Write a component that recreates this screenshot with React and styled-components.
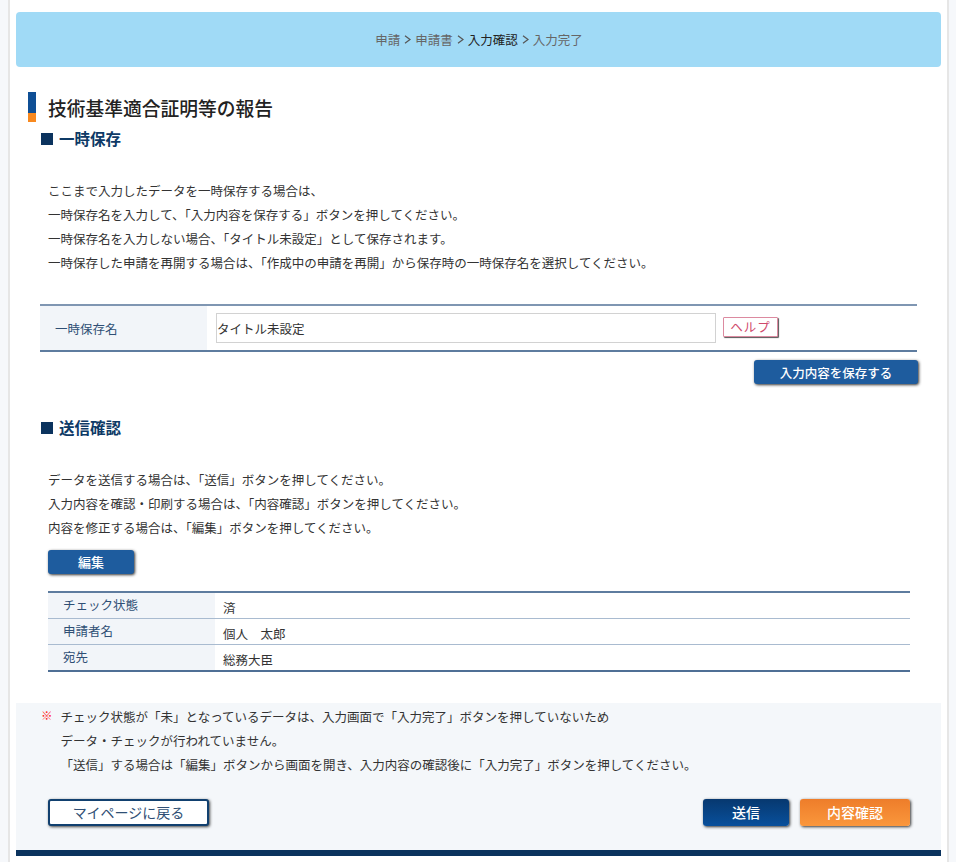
import React from "react";
import styled, { createGlobalStyle } from "styled-components";

const Global = createGlobalStyle`
  html, body { margin: 0; padding: 0; background: #f6f8fb; }
  body { font-family: "Noto Sans CJK JP", "Noto Sans", sans-serif; color: #333; overflow: hidden; }
`;
const Page = styled.div`
  box-sizing: border-box; width: 941px; height: 862px; margin-left: 8px; background: #fff;
  border-left: 2px solid #e6e6e6; border-right: 2px solid #e6e6e6; padding: 12px 6px 0;
`;
const Crumbs = styled.nav`
  height: 55px; border-radius: 4px; background: #a0daf6; display: flex; align-items: center; justify-content: center;
  gap: 4px; font-size: 12.5px; color: #666; padding-left: 1px; box-sizing: border-box;
`;
const Crumb = styled.span`color: ${p => (p.$on ? "#222" : "#666")};`;
const Sep = styled.svg`width: 7px; height: 9px; fill: none; stroke: #555; stroke-width: 1.2;`;
const Title = styled.h1`
  margin: 25px 0 0 12px; height: 30px; display: flex; align-items: center; gap: 12px;
  font-size: 18.75px; font-weight: 500; color: #222; line-height: 30px;
  &::before { content: ""; width: 8px; height: 30px; background: linear-gradient(#0f4f95 0 21px, #f8891f 21px); }
`;
const TitleText = styled.span`position: relative; top: 1px;`;
const Heading = styled.h2`
  margin: ${p => p.$top}px 0 0 25px; height: 20px; display: flex; align-items: center; gap: 6px;
  font-size: 15.5px; font-weight: 700; color: #0e3a66; line-height: 20px;
  &::before { content: ""; width: 12px; height: 12px; margin-top: 1px; background: #0b335e; }
`;
const Copy = styled.div`
  margin: ${p => p.$top}px 0 0 32px; font-size: 12.5px; line-height: 24px; color: #333;
`;
const SaveTable = styled.div`
  margin: 29px 0 0 24px; width: 877px; height: 48px; box-sizing: border-box; display: flex;
  border-top: 2px solid #7f96b2; border-bottom: 2px solid #5e7c9f;
`;
const SaveLabel = styled.div`
  width: 167px; background: #f2f5f9; color: #2f4f75; font-size: 12.5px; padding-left: 15px; box-sizing: border-box;
  display: flex; align-items: center;
`;
const SaveField = styled.div`display: flex; align-items: center; padding-left: 9px; gap: 7px;`;
const Input = styled.input`
  box-sizing: border-box; width: 500px; height: 30px; border: 1px solid #d2d2d2; padding: 0;
  font: 12.5px "Noto Sans CJK JP", sans-serif; color: #333; background: #fff; outline: none;
`;
const Help = styled.button`
  box-sizing: border-box; width: 55px; height: 20px; padding: 0; margin-top: -2px; background: #fff; border: 1px solid #dc8aa0; border-radius: 1px;
  box-shadow: 1px 1px 1px #555; color: #cf4a6c; font: 12.5px "Noto Sans CJK JP", sans-serif; line-height: 16px; letter-spacing: 1px;
`;
const Right = styled.div`display: flex; justify-content: flex-end; margin: 8px 23px 0 0;`;
const Blue = styled.button`
  box-sizing: border-box; width: ${p => p.$w}px; height: 24px; padding: 0; border: none; border-radius: 3px;
  background: #1e5c9e; color: #fff; font: 500 ${p => p.$fs}px "Noto Sans CJK JP", sans-serif;
  box-shadow: 1px 1px 3px #333;
`;
const EditWrap = styled.div`margin: 8px 0 0 32px;`;
const Info = styled.div`
  margin: 17px 0 0 32px; width: 862px; box-sizing: border-box; border-top: 2px solid #5e7c9f; border-bottom: 2px solid #4f6f95;
`;
const InfoRow = styled.div`
  display: flex; height: ${p => p.$h}px; box-sizing: border-box; border-bottom: ${p => (p.$last ? "none" : "1px solid #a9bbd0")};
`;
const InfoLabel = styled.div`
  width: 167px; background: #f2f5f9; color: #2f4f75; font-size: 12.5px; line-height: 24px; padding-left: 15px; box-sizing: border-box;
`;
const InfoValue = styled.div`
  padding: 3px 0 0 8px; font-size: 12.5px; line-height: 24px; color: #333;
`;
const Note = styled.section`
  margin-top: 31px; height: 147px; box-sizing: border-box; background: #f4f7fa; padding: 2px 0 0 25px;
`;
const NoteLines = styled.div`
  display: flex; gap: 8px; font-size: 12.5px; line-height: 24px; color: #333;
`;
const Mark = styled.span`color: #ff1f1f; font-size: 11.5px; line-height: 20px;`;
const Actions = styled.div`
  display: flex; align-items: center; margin: 22px 31px 0 7px; gap: 11px;
`;
const Back = styled.button`
  box-sizing: border-box; width: 161px; height: 27px; margin-right: auto; padding: 0; background: #fff; border: 2px solid #11406f; border-radius: 3px;
  box-shadow: 1px 1px 3px #444; color: #2f4f75; font: 14px "Noto Sans CJK JP", sans-serif;
`;
const Send = styled.button`
  box-sizing: border-box; width: 86px; height: 27px; padding: 0; border: none; border-radius: 3px;
  background: linear-gradient(#07386f, #08509c); color: #fff; font: 500 14px "Noto Sans CJK JP", sans-serif; box-shadow: 1px 1px 3px #333;
`;
const Confirm = styled(Send)`
  width: 110px; background: linear-gradient(#ee7d2a, #fa973c);
`;
const Rule = styled.div`height: 6px; background: #0b335e;`;

const Chevron = () => (
  <Sep viewBox="0 0 7 9"><path d="M1 .8 6 4.5 1 8.2" /></Sep>
);

export default function App() {
  return (
    <>
      <Global />
      <Page>
        <Crumbs>
          <Crumb>申請</Crumb>
          <Chevron />
          <Crumb>申請書</Crumb>
          <Chevron />
          <Crumb $on>入力確認</Crumb>
          <Chevron />
          <Crumb>入力完了</Crumb>
        </Crumbs>
        <Title><TitleText>技術基準適合証明等の報告</TitleText></Title>
        <Heading $top={6}>一時保存</Heading>
        <Copy $top={31}>
          ここまで入力したデータを一時保存する場合は、<br />
          一時保存名を入力して、「入力内容を保存する」ボタンを押してください。<br />
          一時保存名を入力しない場合、「タイトル未設定」として保存されます。<br />
          一時保存した申請を再開する場合は、「作成中の申請を再開」から保存時の一時保存名を選択してください。
        </Copy>
        <SaveTable>
          <SaveLabel>一時保存名</SaveLabel>
          <SaveField>
            <Input defaultValue="タイトル未設定" />
            <Help>ヘルプ</Help>
          </SaveField>
        </SaveTable>
        <Right><Blue $w={164} $fs={12.5}>入力内容を保存する</Blue></Right>
        <Heading $top={33}>送信確認</Heading>
        <Copy $top={31}>
          データを送信する場合は、「送信」ボタンを押してください。<br />
          入力内容を確認・印刷する場合は、「内容確認」ボタンを押してください。<br />
          内容を修正する場合は、「編集」ボタンを押してください。
        </Copy>
        <EditWrap><Blue $w={86} $fs={13}>編集</Blue></EditWrap>
        <Info>
          <InfoRow $h={26}><InfoLabel>チェック状態</InfoLabel><InfoValue>済</InfoValue></InfoRow>
          <InfoRow $h={26}><InfoLabel>申請者名</InfoLabel><InfoValue>個人　太郎</InfoValue></InfoRow>
          <InfoRow $h={25} $last><InfoLabel>宛先</InfoLabel><InfoValue>総務大臣</InfoValue></InfoRow>
        </Info>
        <Note>
          <NoteLines>
            <Mark>※</Mark>
            <div>
              チェック状態が「未」となっているデータは、入力画面で「入力完了」ボタンを押していないため<br />
              　データ・チェックが行われていません。<br />
              　「送信」する場合は「編集」ボタンから画面を開き、入力内容の確認後に「入力完了」ボタンを押してください。
            </div>
          </NoteLines>
          <Actions>
            <Back>マイページに戻る</Back>
            <Send>送信</Send>
            <Confirm>内容確認</Confirm>
          </Actions>
        </Note>
        <Rule />
      </Page>
    </>
  );
}
